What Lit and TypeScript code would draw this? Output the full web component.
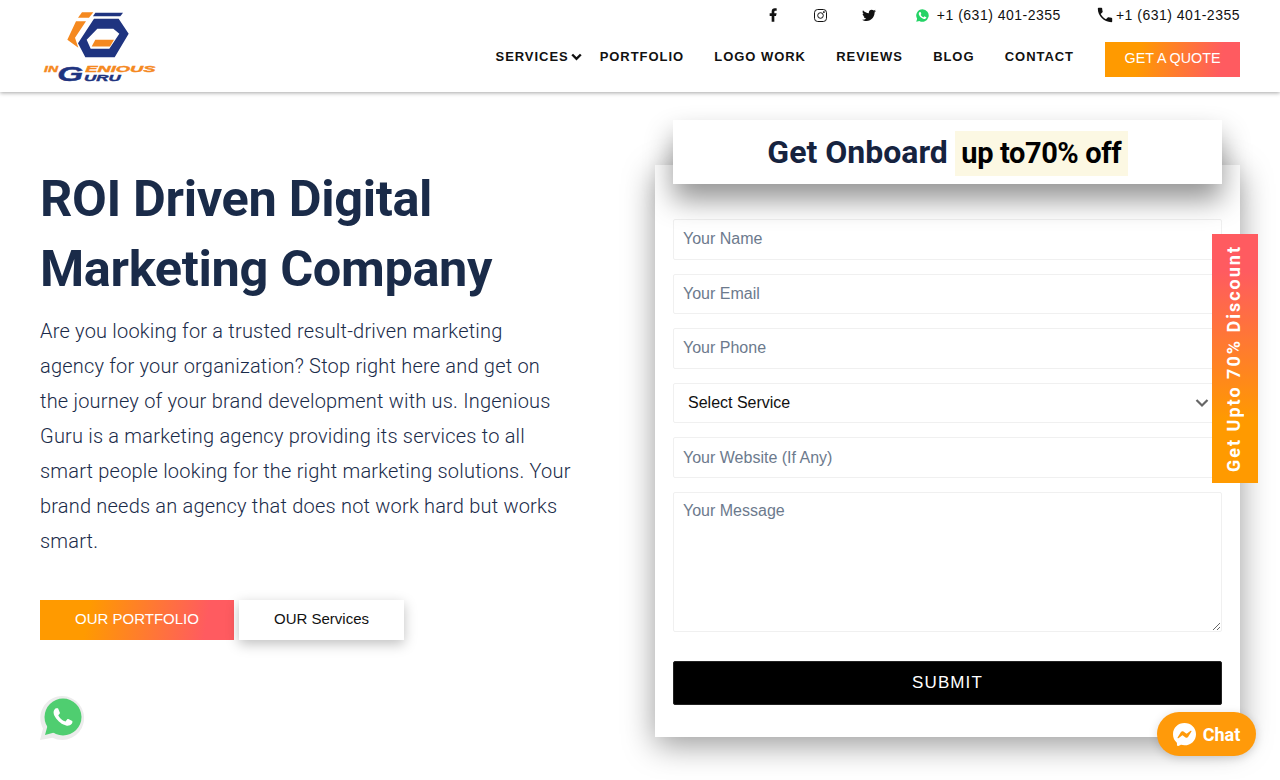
import { LitElement, html, css, svg } from 'lit';
import { customElement } from 'lit/decorators.js';

const phonePath = 'M6.62 10.79c1.44 2.83 3.76 5.14 6.59 6.59l2.2-2.2c.27-.27.67-.36 1.02-.24 1.12.37 2.33.57 3.57.57.55 0 1 .45 1 1V20c0 .55-.45 1-1 1-9.39 0-17-7.61-17-17 0-.55.45-1 1-1h3.5c.55 0 1 .45 1 1 0 1.25.2 2.45.57 3.57.11.35.03.74-.25 1.02l-2.2 2.2z';
const waBubble = 'M12 2a10 10 0 0 0-8.6 15.1L2 22l5-1.3A10 10 0 1 0 12 2z';
const waPhone = 'M17.47 14.38c-.3-.15-1.76-.87-2.03-.97-.27-.1-.47-.15-.67.15-.2.3-.77.97-.94 1.16-.17.2-.35.22-.64.07-.3-.15-1.26-.46-2.39-1.48-.88-.79-1.48-1.76-1.65-2.06-.17-.3-.02-.46.13-.6.13-.13.3-.35.45-.52.15-.17.2-.3.3-.5.1-.2.05-.37-.03-.52-.07-.15-.67-1.61-.92-2.21-.24-.58-.49-.5-.67-.51l-.57-.01c-.2 0-.52.07-.79.37-.27.3-1.04 1.02-1.04 2.48s1.07 2.88 1.22 3.07c.15.2 2.1 3.2 5.08 4.49.71.31 1.26.49 1.69.63.71.23 1.36.19 1.87.12.57-.09 1.76-.72 2.01-1.41.25-.7.25-1.29.17-1.41-.07-.13-.27-.2-.57-.35z';

const logoOrange = '#f5891f';
const logoNavy = '#1f3480';

const logo = svg`
  <g fill="${logoOrange}">
    <path d="M186 35h34l-13 17h-33z" />
    <path d="M168 62h30l-33 50 10 30-33-24z" />
    <path d="M226 118h56l-12 20h-55z" />
  </g>
  <g fill="${logoNavy}">
    <path d="M226 37h83l-8 10h-82z" />
    <path fill-rule="evenodd" d="M222 55H296L326 100L284 170H196L174 128ZM232 85L200 118L212 145H268L298 100L280 85Z" />
  </g>
  <g font-family="Liberation Sans" font-weight="700" font-style="italic" stroke-width="1.2">
    <text x="72" y="215" font-size="28" fill="${logoOrange}" stroke="${logoOrange}" textLength="42" lengthAdjust="spacingAndGlyphs">IN</text>
    <text x="196" y="215" font-size="28" fill="${logoOrange}" stroke="${logoOrange}" textLength="210" lengthAdjust="spacingAndGlyphs">ENIOUS</text>
    <text x="112" y="241" font-size="60" fill="${logoNavy}" stroke="${logoNavy}" textLength="78" lengthAdjust="spacingAndGlyphs">G</text>
    <text x="192" y="241" font-size="28" fill="${logoNavy}" stroke="${logoNavy}" textLength="110" lengthAdjust="spacingAndGlyphs">URU</text>
  </g>
`;

@customElement('app-root')
export class AppRoot extends LitElement {
  static styles = css`
    :host {
      display: block;
      position: relative;
      height: 780px;
      overflow: hidden;
      background: #fff;
      font-family: 'Liberation Sans', Arial, sans-serif;
    }

    header {
      height: 92px;
      box-sizing: border-box;
      padding: 0 40px;
      display: flex;
      justify-content: space-between;
      background: #fff;
      box-shadow: 0 1px 4px rgba(0, 0, 0, 0.35);
    }

    .logo {
      display: block;
      width: 120px;
      height: 77px;
      margin-top: 7px;
    }

    .header-right {
      display: flex;
      flex-direction: column;
      align-items: flex-end;
    }

    .topbar {
      height: 30px;
      display: flex;
      align-items: center;
      color: #111;
      font-size: 14px;
      letter-spacing: 0.5px;
    }

    .topbar svg {
      display: block;
      fill: #111;
    }

    .social {
      display: flex;
      align-items: center;
      justify-content: center;
      width: 16px;
      margin-right: 32px;
    }

    .social.last {
      margin-right: 38px;
    }

    .wa {
      margin-right: 7px;
    }

    .topbar .wa {
      fill: #25d366;
    }

    .call {
      margin-left: 36px;
      margin-right: 3px;
    }

    nav {
      display: flex;
      align-items: center;
      margin-top: 12px;
      height: 35px;
    }

    nav a {
      color: #111;
      font-size: 13px;
      font-weight: 700;
      letter-spacing: 0.95px;
      margin-right: 30.3px;
      margin-top: -6px;
      white-space: nowrap;
    }

    nav a.services {
      display: flex;
      align-items: center;
      margin-right: 18px;
    }

    nav a.services svg {
      margin-left: 2px;
    }

    .grad {
      background: linear-gradient(100deg, #ff9a00 25%, #ff5b60 85%);
      color: #fff;
    }

    .quote {
      width: 135px;
      height: 35px;
      margin-left: 0.7px;
      line-height: 33px;
      text-align: center;
      font-size: 14.3px;
      box-sizing: border-box;
    }

    main {
      display: flex;
      justify-content: space-between;
      padding: 0 40px;
    }

    .intro {
      width: 531px;
      padding-top: 72px;
      color: #1a2b49;
    }

    h1 {
      margin: 0;
      font-family: Roboto, sans-serif;
      font-size: 50.5px;
      line-height: 70px;
      font-weight: 700;
      letter-spacing: -0.35px;
    }

    .intro p {
      margin: 10px 0 0;
      font-family: Roboto, sans-serif;
      font-size: 20px;
      font-weight: 300;
      line-height: 35px;
      letter-spacing: 0.2px;
    }

    .actions {
      display: flex;
      gap: 5px;
      margin-top: 41px;
      font-size: 15px;
    }

    .actions div {
      height: 40px;
      line-height: 38px;
      text-align: center;
      box-sizing: border-box;
    }

    .actions .primary {
      width: 194px;
    }

    .actions .secondary {
      width: 165px;
      background: #fff;
      color: #111;
      box-shadow: 0 4px 12px rgba(0, 0, 0, 0.25);
    }

    .panel {
      width: 585px;
      margin-top: 73px;
      height: 572px;
      box-sizing: border-box;
      padding: 0 18px;
      background: #fff;
      box-shadow: 0 8px 30px rgba(0, 0, 0, 0.4);
    }

    .title {
      height: 64px;
      margin-top: -45px;
      display: flex;
      align-items: center;
      justify-content: center;
      gap: 7px;
      position: relative;
      background: #fff;
      color: #16233f;
      font-family: Roboto, sans-serif;
      font-weight: 700;
      font-size: 32px;
      box-shadow: 0 16px 28px rgba(0, 0, 0, 0.42);
    }

    .title span {
      height: 45px;
      line-height: 45px;
      padding: 0 6.5px;
      background: #fcf8e3;
      color: #000;
      font-size: 29px;
      letter-spacing: -0.4px;
      margin-top: 3px;
    }

    form {
      display: flex;
      flex-direction: column;
      gap: 14px;
      margin-top: 35px;
    }

    input,
    textarea,
    select {
      display: block;
      width: 100%;
      box-sizing: border-box;
      margin: 0;
      border: 1px solid #f0f0f0;
      border-radius: 2px;
      background: #fff;
      font-family: 'Liberation Sans', Arial, sans-serif;
      font-size: 16px;
      outline: none;
    }

    input {
      height: 40.6px;
      padding: 0 9px;
    }

    textarea {
      height: 140px;
      padding: 9px;
      resize: vertical;
    }

    ::placeholder {
      color: #6c7a8d;
      opacity: 1;
    }

    .select-wrap {
      position: relative;
    }

    select {
      height: 40.6px;
      padding: 0 14px 2px;
      appearance: none;
      color: #111;
    }

    .select-wrap svg {
      position: absolute;
      right: 13px;
      top: 15px;
    }

    .submit {
      height: 44px;
      margin-top: 15px;
      border: 1px solid #222;
      border-radius: 2px;
      background: #000;
      color: #fff;
      font-family: 'Liberation Sans', Arial, sans-serif;
      font-size: 17px;
      letter-spacing: 1.1px;
    }

    .side-tab {
      position: absolute;
      left: 1212px;
      top: 234px;
      width: 46px;
      height: 249px;
      padding-right: 3px;
      box-sizing: border-box;
      display: flex;
      align-items: center;
      justify-content: center;
      background: linear-gradient(0deg, #ff9a00 25%, #ff5b60 85%);
      color: #fff;
    }

    .side-tab span {
      writing-mode: vertical-rl;
      transform: rotate(180deg);
      font-family: Roboto, sans-serif;
      font-weight: 700;
      font-size: 18px;
      letter-spacing: 2px;
      white-space: nowrap;
    }

    .wa-float {
      position: absolute;
      left: 40px;
      top: 696px;
      width: 44px;
      height: 44px;
    }

    .chat {
      position: absolute;
      left: 1157px;
      top: 712px;
      width: 99px;
      height: 44px;
      border-radius: 22px;
      display: flex;
      align-items: center;
      justify-content: center;
      gap: 7px;
      background: #ff9a0a;
      color: #fff;
      font-family: Roboto, sans-serif;
      font-weight: 700;
      font-size: 18px;
      box-shadow: 0 2px 10px rgba(0, 0, 0, 0.15);
    }
  `;

  render() {
    return html`
      <header>
        <svg class="logo" viewBox="60 20 360 230">${logo}</svg>
        <div class="header-right">
          <div class="topbar">
            <span class="social">
              <svg width="16" height="16" viewBox="0 0 24 24"><path d="M14 13.5h2.5l1-4H14v-2c0-1.03 0-2 2-2h1.5V2.14c-.326-.043-1.557-.14-2.857-.14C11.928 2 10 3.657 10 6.7v2.8H7v4h3V22h4v-8.5z" /></svg>
            </span>
            <span class="social">
              <svg width="13" height="13" viewBox="0 0 13 13" style="fill:none;stroke:#111">
                <rect x="0.5" y="0.5" width="12" height="12" rx="3.2" />
                <circle cx="6.5" cy="6.5" r="2.8" />
                <circle cx="9.9" cy="3.1" r="0.5" style="fill:#111" />
              </svg>
            </span>
            <span class="social last">
              <svg width="16" height="16" viewBox="0 0 24 24"><path d="M22.46 6c-.77.35-1.6.58-2.46.69.88-.53 1.56-1.37 1.88-2.38-.83.5-1.75.85-2.72 1.05C18.37 4.5 17.26 4 16 4c-2.35 0-4.27 1.92-4.27 4.29 0 .34.04.67.11.98C8.28 9.09 5.11 7.38 3 4.79c-.37.63-.58 1.37-.58 2.15 0 1.49.75 2.81 1.91 3.56-.71 0-1.37-.2-1.95-.5v.03c0 2.08 1.48 3.82 3.44 4.21a4.22 4.22 0 0 1-1.93.07 4.28 4.28 0 0 0 4 2.98 8.521 8.521 0 0 1-5.33 1.84c-.34 0-.68-.02-1.02-.06C3.44 20.29 5.7 21 8.12 21 16 21 20.33 14.46 20.33 8.79c0-.19 0-.37-.01-.56.84-.6 1.56-1.36 2.14-2.23z" /></svg>
            </span>
            <svg class="wa" width="15" height="15" viewBox="0 0 24 24"><path d="${waBubble}" /><path style="fill:#fff" d="${waPhone}" /></svg>
            <span>+1 (631) 401-2355</span>
            <svg class="call" width="16" height="16" viewBox="2 2 20 20"><path d="${phonePath}" /></svg>
            <span>+1 (631) 401-2355</span>
          </div>
          <nav>
            <a class="services">SERVICES
              <svg width="11" height="8" viewBox="0 0 11 8"><path d="M1.2 1.5l4.3 4.3 4.3-4.3" fill="none" stroke="#111" stroke-width="2.4" /></svg>
            </a>
            <a>PORTFOLIO</a>
            <a>LOGO WORK</a>
            <a>REVIEWS</a>
            <a>BLOG</a>
            <a>CONTACT</a>
            <div class="quote grad">GET A QUOTE</div>
          </nav>
        </div>
      </header>

      <main>
        <section class="intro">
          <h1>ROI Driven Digital Marketing Company</h1>
          <p>Are you looking for a trusted result-driven marketing agency for your organization? Stop right here and get on the journey of your brand development with us. Ingenious Guru is a marketing agency providing its services to all smart people looking for the right marketing solutions. Your brand needs an agency that does not work hard but works smart.</p>
          <div class="actions">
            <div class="primary grad">OUR PORTFOLIO</div>
            <div class="secondary">OUR Services</div>
          </div>
        </section>

        <section class="panel">
          <div class="title">Get Onboard <span>up to70% off</span></div>
          <form>
            <input placeholder="Your Name" />
            <input placeholder="Your Email" />
            <input placeholder="Your Phone" />
            <div class="select-wrap">
              <select><option>Select Service</option></select>
              <svg width="14" height="10" viewBox="0 0 14 10"><path d="M1.5 2l5.5 5.5L12.5 2" fill="none" stroke="#666" stroke-width="2.2" /></svg>
            </div>
            <input placeholder="Your Website (If Any)" />
            <textarea placeholder="Your Message"></textarea>
            <button class="submit" type="button">SUBMIT</button>
          </form>
        </section>
      </main>

      <div class="side-tab"><span>Get Upto 70% Discount</span></div>

      <svg class="wa-float" viewBox="0 0 44 44">
        <path fill="#ececec" d="M22 0a22 22 0 1 1-9.5 41.8L0 44l3-11.5A22 22 0 0 1 22 0z" />
        <circle cx="23" cy="21" r="18.5" fill="#4fce70" />
        <path fill="#4fce70" d="M8 28l-3 11 11-3z" />
        <g transform="translate(4.2 2.2) scale(1.56)"><path fill="#fff" d="${waPhone}" /></g>
      </svg>

      <div class="chat">
        <svg width="23" height="23" viewBox="2 2 20 20">
          <path fill="#fff" d="M12 2C6.36 2 2 6.13 2 11.7c0 2.91 1.19 5.44 3.14 7.17.16.13.26.35.27.57l.05 1.78c.04.57.6.94 1.13.71l1.98-.87c.17-.08.36-.09.53-.05.91.25 1.87.38 2.9.38 5.64 0 10-4.13 10-9.7S17.64 2 12 2z" />
          <path fill="#ff9a0a" d="M6 14.54l2.94-4.66c.47-.74 1.47-.93 2.17-.4l2.34 1.75c.21.16.51.16.72 0l3.16-2.4c.42-.32.97.18.69.63l-2.94 4.66c-.47.74-1.47.93-2.17.4l-2.34-1.75a.6.6 0 0 0-.72 0l-3.16 2.4c-.42.32-.97-.18-.69-.63z" />
        </svg>
        Chat
      </div>
    `;
  }
}

declare global {
  interface HTMLElementTagNameMap {
    'app-root': AppRoot;
  }
}
